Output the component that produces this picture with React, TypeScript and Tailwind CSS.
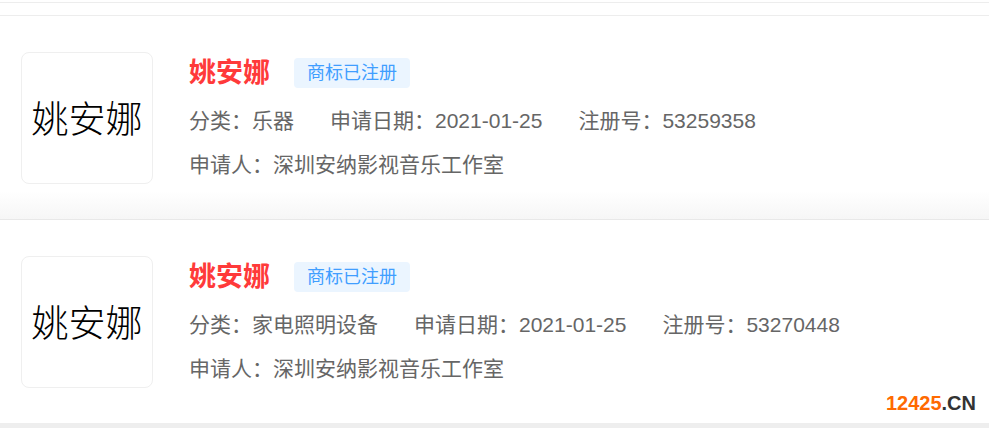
const items = [
  {
    name: "姚安娜",
    category: "乐器",
    date: "2021-01-25",
    regNo: "53259358",
    applicant: "深圳安纳影视音乐工作室",
  },
  {
    name: "姚安娜",
    category: "家电照明设备",
    date: "2021-01-25",
    regNo: "53270448",
    applicant: "深圳安纳影视音乐工作室",
  },
];

function TrademarkCard({ item, first }: { item: (typeof items)[number]; first?: boolean }) {
  return (
    <div
      className={
        "flex items-center px-[21px] " +
        (first
          ? "h-[204px] border-b border-[#e8e8e8] bg-[linear-gradient(to_bottom,#ffffff_86%,#f6f6f6)]"
          : "h-[203px] bg-white")
      }
    >
      <div className="flex h-[132px] w-[132px] shrink-0 items-center justify-center rounded-lg border border-[#efefef] bg-white">
        <span className="text-[37px] font-light text-black [font-family:'Noto_Sans_CJK_SC',sans-serif]">
          {item.name}
        </span>
      </div>

      <div className="ml-[36px] flex flex-col pt-[3px] text-[21px] text-[#666]">
        <div className="flex h-[30px] items-center">
          <span className="text-[27px] font-bold leading-none text-[#ff3a3a]">{item.name}</span>
          <span className="ml-[24px] flex h-[30px] items-center rounded bg-[#ebf5ff] px-[13px] text-[18px] text-[#409eff]">
            商标已注册
          </span>
        </div>
        <div className="mt-[18px] flex h-[30px] items-center gap-[36px] whitespace-nowrap">
          <span>分类：{item.category}</span>
          <span>申请日期：{item.date}</span>
          <span>注册号：{item.regNo}</span>
        </div>
        <div className="mt-[14px] flex h-[30px] items-center whitespace-nowrap">
          <span>申请人：{item.applicant}</span>
        </div>
      </div>
    </div>
  );
}

export default function App() {
  return (
    <div className="relative h-[428px] w-[989px] overflow-hidden bg-[#eeeeee] [font-family:'Liberation_Sans','Noto_Sans_CJK_SC',sans-serif]">
      <div className="bg-white">
        <div className="h-[3px] border-b border-[#ededed]" />
        <div className="h-[13px] border-b border-[#ededed]" />
        {items.map((item, i) => (
          <TrademarkCard key={i} item={item} first={i === 0} />
        ))}
      </div>

      <div className="absolute bottom-[15px] right-[13px] text-[20px] font-bold leading-none">
        <span className="text-[#ff6a00]">12425</span>
        <span className="text-[#333]">.CN</span>
      </div>
    </div>
  );
}
